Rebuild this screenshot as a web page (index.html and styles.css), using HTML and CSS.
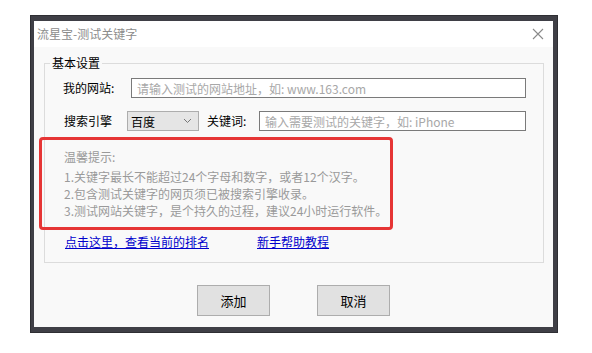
FILE: index.html
```html
<!DOCTYPE html>
<html lang="zh-CN">
  <head>
    <meta charset="UTF-8" />
    <meta name="viewport" content="width=device-width, initial-scale=1.0" />
    <title>流星宝-测试关键字</title>
    <link rel="stylesheet" href="styles.css">
  </head>
  <body>
    <div class="frame">
      <div class="window">
        <div class="title-bar">
          <span class="title">流星宝-测试关键字</span>
          <svg class="close" width="12" height="12" viewBox="0 0 12 12">
            <path d="M1 1 L11 11 M11 1 L1 11" stroke="#8a8a8a" stroke-width="1.1" fill="none" />
          </svg>
        </div>
        <div class="body">
          <fieldset class="group">
            <legend>基本设置</legend>
            <div class="row">
              <label class="label site-label">我的网站:</label>
              <input class="field" type="text" placeholder="请输入测试的网站地址，如: www.163.com" />
            </div>
            <div class="row row-engine">
              <label class="label engine-label">搜索引擎</label>
              <div class="select">
                <span>百度</span>
                <svg width="9" height="6" viewBox="0 0 9 6">
                  <path d="M1 1 L4.5 4.5 L8 1" stroke="#777" stroke-width="1" fill="none" />
                </svg>
              </div>
              <label class="label kw-label">关键词:</label>
              <input class="field" type="text" placeholder="输入需要测试的关键字，如: iPhone" />
            </div>
            <div class="tips">
              <div class="tips-title">温馨提示:</div>
              <div class="tip">1.关键字最长不能超过24个字母和数字，或者12个汉字。</div>
              <div class="tip">2.包含测试关键字的网页须已被搜索引擎收录。</div>
              <div class="tip">3.测试网站关键字，是个持久的过程，建议24小时运行软件。</div>
            </div>
            <div class="links">
              <a href="#">点击这里，查看当前的排名</a>
              <a href="#">新手帮助教程</a>
            </div>
          </fieldset>
          <div class="buttons">
            <button class="btn">添加</button>
            <button class="btn">取消</button>
          </div>
        </div>
      </div>
    </div>
  </body>
</html>
```

FILE: styles.css
```css
body {
  margin: 0;
  background: #fff;
  font-family: "Noto Sans CJK SC", "Liberation Sans", sans-serif;
  font-size: 12px;
}
.frame {
  margin: 15px 0 0 30px;
  width: 528px;
  height: 318px;
  box-sizing: border-box;
  padding: 6px 5px 6px 4px;
  background: #3f3f46;
  box-shadow: inset 0 0 0 1px #2e2e33;
}
.window {
  height: 100%;
  background: #f9f9f9;
  display: flex;
  flex-direction: column;
}
.title-bar {
  height: 26px;
  background: #fff;
  display: flex;
  justify-content: space-between;
  align-items: center;
  padding: 0 9px 0 3px;
}
.title {
  color: #8c8c8c;
  line-height: 14px;
}
.body {
  flex: 1;
  padding-top: 9px;
}
.group {
  box-sizing: border-box;
  width: 500px;
  height: 207px;
  margin: 0 0 0 10px;
  padding: 8px 17px 0 18px;
  border: 1px solid #dcdcdc;
}
.group legend {
  margin-left: -13px;
  padding: 0 2px;
  line-height: 14px;
  color: #000;
}
.row {
  display: flex;
  align-items: center;
  height: 20px;
}
.row-engine {
  margin-top: 13px;
}
.label {
  color: #000;
  line-height: 14px;
}
.site-label {
  width: 68px;
}
.engine-label {
  width: 63px;
  margin-left: 1px;
}
.kw-label {
  width: 52px;
}
.field {
  flex: 1;
  height: 20px;
  box-sizing: border-box;
  border: 1px solid #7a7a7a;
  background: #fff;
  padding: 0 5px;
  font: inherit;
  outline: none;
}
.field::placeholder {
  color: #a8a8a8;
}
.select {
  width: 72px;
  height: 20px;
  box-sizing: border-box;
  margin-right: 8px;
  border: 1px solid #adadad;
  background: #e5e5e5;
  display: flex;
  align-items: center;
  justify-content: space-between;
  padding: 0 6px 0 3px;
  color: #000;
}
.tips {
  margin: 6px 0 0 -24px;
  width: 354px;
  box-sizing: border-box;
  border: 3px solid #e63535;
  border-radius: 4px;
  padding: 8px 0 8px 22px;
  color: #9a9a9a;
  line-height: 17px;
}
.tips-title {
  margin-bottom: 3px;
}
.links {
  margin-top: 4px;
  display: flex;
  gap: 48px;
  line-height: 16px;
  padding-left: 2px;
}
.links a {
  color: #0000cc;
  text-decoration: underline;
}
.buttons {
  display: flex;
  justify-content: center;
  gap: 47px;
  margin-top: 22px;
}
.btn {
  width: 73px;
  height: 31px;
  border: 1px solid #adadad;
  background: #e1e1e1;
  font: inherit;
  font-size: 13px;
  color: #000;
}
```
